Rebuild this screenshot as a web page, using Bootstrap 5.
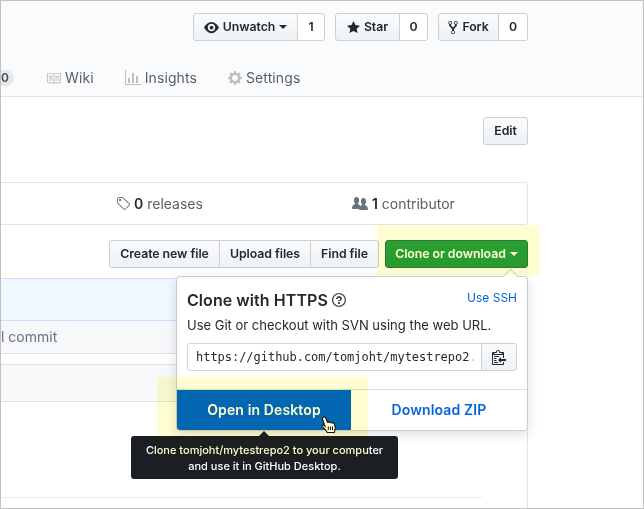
<!DOCTYPE html>
<html lang="en">
<head>
<meta charset="utf-8">
<meta name="viewport" content="width=device-width, initial-scale=1">
<title>mytestrepo2</title>
<link href="https://cdn.jsdelivr.net/npm/bootstrap@5.3.0/dist/css/bootstrap.min.css" rel="stylesheet">
<style>
body { font-family: Inter, "Liberation Sans", sans-serif; font-size: 14px; line-height: 20px; color: #24292e; background: #fff; }
.frame { width: 644px; height: 509px; border: 1px solid #c3c0c0; border-top-color: #c8bfbf; }
svg { fill: currentColor; display: block; flex: none; }
.repo-head { height: 96px; background: #fafbfc; border-bottom: 1px solid #e1e4e8; padding-top: 12px; }
.inner { width: 527px; }
.social { gap: 10px; }
.btn-gh { --bs-btn-color: #24292e; --bs-btn-font-size: 12.3px; --bs-btn-font-weight: 600; --bs-btn-line-height: 18px; --bs-btn-padding-x: 0; --bs-btn-padding-y: 0; --bs-btn-border-color: #cdcfd1; --bs-btn-border-radius: 3px; height: 28px; background-image: linear-gradient(#fafbfc, #eff3f6 90%); display: flex; align-items: center; justify-content: center; white-space: nowrap; letter-spacing: -.05px; }
.btn-group > .btn-gh { flex: none; }
.btn-plain { background: #fff; }
.btn-green { --bs-btn-color: #fff; --bs-btn-border-color: #2c7a3c; background-image: linear-gradient(#2ba03a, #279c35); width: 143px; }
.w-unwatch { width: 105px; } .w-star { width: 65px; } .w-fork { width: 61px; }
.w-n1 { width: 28px; } .w-n2 { width: 29px; } .w-n3 { width: 30px; }
.w-create { width: 111px; } .w-upload { width: 92px; } .w-find { width: 69px; }
.w-edit { width: 45px; }
.caret { width: 0; height: 0; border: 4px solid transparent; border-top-color: currentColor; border-bottom: 0; margin-left: 4px; }
.tabs { height: 36px; margin-top: 19px; color: #586069; font-size: 14px; letter-spacing: .1px; }
.tabs svg { color: #bcbfc2; }
.counter { width: 13px; height: 16px; line-height: 16px; font-size: 12px; font-weight: 600; background: #e8e9eb; border-radius: 0 8px 8px 0; color: #444d56; }
.tab-wiki { margin-left: 32px; } .tab-insights { margin-left: 31px; } .tab-settings { margin-left: 31px; }
.stats { height: 43px; margin-top: 37px; border: 1px solid #e1e4e8; border-left: 0; border-radius: 0 3px 3px 0; color: #586069; }
.stats b { color: #24292e; font-weight: 600; }
.stats svg { color: #6a737d; }
.stat-rel { margin-left: 115px; } .stat-con { margin-left: 149px; }
.actions { margin-top: 15px; gap: 6px; }
.tease { height: 43px; margin-top: 10px; background: #f1f8ff; border: 1px solid #c8e1ff; border-left: 0; }
.commit { height: 33px; background: #f6f8fa; border: 1px solid #dfe2e5; border-top: 0; border-left: 0; color: #6a737d; line-height: 31px; font-size: 14px; }
.files { margin-top: 10px; height: 144px; border: 1px solid #dfe2e5; border-width: 1px 1px 0 0; }
.files-head { height: 37px; background: #f6f8fa; border-bottom: 1px solid #dfe2e5; }
.readme { width: 481px; height: 96px; border-bottom: 1px solid #eaecef; }
.clone-menu { position: absolute; left: 175px; top: 275px; width: 352px; height: 155px; background: #fff; border: 1px solid #c9cbcd; border-radius: 4px; box-shadow: 0 3px 12px rgba(27,31,35,.15); z-index: 2; }
.clone-menu::before { content: ""; position: absolute; right: 11px; top: -6px; width: 11px; height: 11px; background: #fff; border: 1px solid #d5d5bd; border-width: 1px 0 0 1px; transform: rotate(45deg); }
.clone-top { height: 112px; padding: 11px 10px 0; }
.clone-title { font-size: 16px; font-weight: 600; line-height: 24px; letter-spacing: .06px; }
.clone-title svg { color: #444d56; }
.ssh { font-size: 12px; color: #0366d6; text-decoration: none; }
.clone-sub { font-size: 13px; margin-top: 3px; }
.url-box { height: 28px; width: 295px; border: 1px solid #d1d5da; border-radius: 3px 0 0 3px; font: 12px/26px "DejaVu Sans Mono", monospace; letter-spacing: -.03px; padding-left: 8px; overflow: hidden; white-space: nowrap; }
.url-end { color: #c3c6c9; }
.w-copy { width: 36px; margin-left: -1px; border-radius: 0 3px 3px 0; }
.clone-foot { height: 41px; border-top: 1px solid #dcdfe2; font-size: 14px; font-weight: 600; letter-spacing: .13px; }
.open-desk { width: 174px; background: #0366d6; color: #fff; border-radius: 0 0 0 3px; text-decoration: none; }
.zip { color: #0366d6; text-decoration: none; }
.tip { position: absolute; left: 130px; top: 435px; width: 267px; height: 43px; background: #1b1f23; color: #fff; border-radius: 3px; font-size: 11px; line-height: 16px; padding-top: 6px; z-index: 3; font-weight: 500; }
.tip::before { content: ""; position: absolute; left: 128px; top: -5px; border: 5px solid transparent; border-top: 0; border-bottom-color: #1b1f23; }
.glow { position: absolute; background: #fffed2; mix-blend-mode: multiply; z-index: 4; }
.glow-a { left: 376px; top: 224px; width: 163px; height: 50px; }
.glow-b { left: 156px; top: 376px; width: 211px; height: 79px; }
.hand { position: absolute; left: 320px; top: 415px; z-index: 3; }
</style>
<script src="https://cdn.jsdelivr.net/npm/bootstrap@5.3.0/dist/js/bootstrap.bundle.min.js"></script>
</head>
<body>
<div class="frame position-relative overflow-hidden">
  <header class="repo-head">
    <div class="inner social d-flex justify-content-end">
      <div class="btn-group">
        <a class="btn btn-gh w-unwatch"><svg class="me-1" width="15" height="15" viewBox="0 0 16 16"><path fill-rule="evenodd" d="M8.06 2C3 2 0 8 0 8s3 6 8.06 6C13 14 16 8 16 8s-3-6-7.94-6zM8 12c-2.2 0-4-1.78-4-4 0-2.2 1.8-4 4-4 2.22 0 4 1.8 4 4 0 2.22-1.78 4-4 4zm2-4c0 1.11-.89 2-2 2-1.11 0-2-.89-2-2 0-1.11.89-2 2-2 1.11 0 2 .89 2 2z"/></svg><span>Unwatch</span><i class="caret"></i></a>
        <a class="btn btn-gh btn-plain w-n1">1</a>
      </div>
      <div class="btn-group">
        <a class="btn btn-gh w-star"><svg class="me-1" width="13" height="15" viewBox="0 0 14 16"><path d="M14 6l-4.9-.64L7 1 4.9 5.36 0 6l3.6 3.26L2.67 14 7 11.67 11.33 14l-.93-4.74z"/></svg><span>Star</span></a>
        <a class="btn btn-gh btn-plain w-n2">0</a>
      </div>
      <div class="btn-group">
        <a class="btn btn-gh w-fork"><svg class="me-1" width="10" height="15" viewBox="0 0 10 16"><path fill-rule="evenodd" d="M8 1a1.993 1.993 0 0 0-1 3.72V6L5 8 3 6V4.72A1.993 1.993 0 0 0 2 1a1.993 1.993 0 0 0-1 3.72V6.5l3 3v1.78A1.993 1.993 0 0 0 5 15a1.993 1.993 0 0 0 1-3.72V9.5l3-3V4.72A1.993 1.993 0 0 0 8 1zM2 4.2C1.34 4.2.8 3.65.8 3c0-.65.55-1.2 1.2-1.2.65 0 1.2.55 1.2 1.2 0 .65-.55 1.2-1.2 1.2zm3 10c-.66 0-1.2-.55-1.2-1.2 0-.65.55-1.2 1.2-1.2.65 0 1.2.55 1.2 1.2 0 .65-.55 1.2-1.2 1.2zm3-10c-.66 0-1.2-.55-1.2-1.2 0-.65.55-1.2 1.2-1.2.65 0 1.2.55 1.2 1.2 0 .65-.55 1.2-1.2 1.2z"/></svg><span>Fork</span></a>
        <a class="btn btn-gh btn-plain w-n3">0</a>
      </div>
    </div>
    <nav class="tabs d-flex align-items-center">
      <span class="counter">0</span>
      <span class="tab-wiki d-flex align-items-center"><svg class="me-1" width="15" height="15" viewBox="0 0 16 16"><path fill-rule="evenodd" d="M3 5h4v1H3V5zm0 3h4V7H3v1zm0 2h4V9H3v1zm11-5h-4v1h4V5zm0 2h-4v1h4V7zm0 2h-4v1h4V9zm2-6v9c0 .55-.45 1-1 1H9.5l-1 1-1-1H2c-.55 0-1-.45-1-1V3c0-.55.45-1 1-1h5.5l1 1 1-1H15c.55 0 1 .45 1 1zm-8 .5L7.5 3H2v9h6V3.5zm7-.5H9.5l-.5.5V12h6V3z"/></svg><span>Wiki</span></span>
      <span class="tab-insights d-flex align-items-center"><svg class="me-1" width="16" height="16" viewBox="0 0 16 16"><path d="M16 14v1H0V0h1v14h15zM5 13H3V8h2v5zm4 0H7V3h2v10zm4 0h-2V6h2v7z"/></svg><span>Insights</span></span>
      <span class="tab-settings d-flex align-items-center"><svg class="me-1" width="14" height="16" viewBox="0 0 14 16"><path fill-rule="evenodd" d="M14 8.77v-1.6l-1.94-.64-.45-1.09.88-1.84-1.13-1.13-1.81.91-1.09-.45-.69-1.92h-1.6l-.63 1.94-1.11.45-1.84-.88-1.13 1.13.91 1.81-.45 1.09L0 7.23v1.59l1.94.64.45 1.09-.88 1.84 1.13 1.13 1.81-.91 1.09.45.69 1.92h1.59l.63-1.94 1.11-.45 1.84.88 1.13-1.13-.92-1.81.47-1.09L14 8.75v.02zM7 11c-1.66 0-3-1.34-3-3s1.34-3 3-3 3 1.34 3 3-1.34 3-3 3z"/></svg><span>Settings</span></span>
    </nav>
  </header>
  <main class="inner">
    <div class="d-flex justify-content-end pt-3 mt-1"><a class="btn btn-gh w-edit">Edit</a></div>
    <div class="stats d-flex align-items-center">
      <span class="stat-rel d-flex align-items-center"><svg class="me-1" width="14" height="16" viewBox="0 0 14 16"><path fill-rule="evenodd" d="M7.73 1.73C7.26 1.26 6.62 1 5.96 1H3.5C2.13 1 1 2.13 1 3.5v2.47c0 .66.27 1.3.73 1.77l6.06 6.06c.39.39 1.02.39 1.41 0l4.59-4.59a.996.996 0 0 0 0-1.41L7.73 1.73zM2.38 7.09c-.31-.3-.47-.7-.47-1.13V3.5c0-.88.72-1.59 1.59-1.59h2.47c.42 0 .83.16 1.13.47l6.14 6.13-4.73 4.73-6.13-6.15zM3.01 3h2v2H3V3h.01z"/></svg><span><b>0</b> releases</span></span>
      <span class="stat-con d-flex align-items-center"><svg class="me-1" width="16" height="16" viewBox="0 0 16 16"><path d="M16 12.999c0 .439-.45 1-1 1H7.995c-.539 0-.994-.447-.995-.999H1c-.54 0-1-.561-1-1 0-2.634 3-4 3-4s.229-.409 0-1c-.841-.621-1.058-.59-1-3 .058-2.419 1.367-3 2.5-3s2.442.58 2.5 3c.058 2.41-.159 2.379-1 3-.229.59 0 1 0 1s1.549.711 2.42 2.088C9.196 9.369 10 8.999 10 8.999s.229-.409 0-1c-.841-.62-1.058-.59-1-3 .058-2.419 1.367-3 2.5-3s2.437.581 2.495 3c.059 2.41-.158 2.38-1 3-.229.59 0 1 0 1s3.005 1.366 3.005 4"/></svg><span><b>1</b> contributor</span></span>
    </div>
    <div class="actions d-flex justify-content-end">
      <div class="btn-group">
        <a class="btn btn-gh w-create">Create new file</a>
        <a class="btn btn-gh w-upload">Upload files</a>
        <a class="btn btn-gh w-find">Find file</a>
      </div>
      <a class="btn btn-gh btn-green"><span>Clone or download</span><i class="caret"></i></a>
    </div>
    <div class="tease"></div>
    <div class="commit">l commit</div>
    <div class="files"><div class="files-head"></div><div class="readme"></div></div>
  </main>

  <section class="clone-menu">
    <div class="clone-top">
      <div class="d-flex justify-content-between">
        <div class="clone-title d-flex align-items-center"><span>Clone with HTTPS</span><svg class="ms-1" width="14" height="16" viewBox="0 0 14 16"><path fill-rule="evenodd" d="M6 10h2v2H6v-2zm4-3.5C10 8.64 8 9 8 9H6c0-.55.45-1 1-1h.5c.28 0 .5-.22.5-.5v-1c0-.28-.22-.5-.5-.5h-1c-.28 0-.5.22-.5.5V7H4c0-1.5 1.5-3 3-3s3 1 3 2.5zM7 2.3c3.14 0 5.7 2.56 5.7 5.7s-2.56 5.7-5.7 5.7A5.71 5.71 0 0 1 1.3 8c0-3.14 2.56-5.7 5.7-5.7zM7 1C3.14 1 0 4.14 0 8s3.14 7 7 7 7-3.14 7-7-3.14-7-7-7z"/></svg></div>
        <a class="ssh">Use SSH</a>
      </div>
      <div class="clone-sub">Use Git or checkout with SVN using the web URL.</div>
      <div class="d-flex mt-2">
        <div class="url-box">https://github.com/tomjoht/mytestrepo2<span class="url-end">.</span></div>
        <a class="btn btn-gh w-copy"><svg width="14" height="16" viewBox="0 0 14 16"><path fill-rule="evenodd" d="M2 13h4v1H2v-1zm5-6H2v1h5V7zm2 3V8l-3 3 3 3v-2h5v-2H9zM4.5 9H2v1h2.5V9zM2 12h2.5v-1H2v1zm9 1h1v2c-.02.28-.11.52-.3.7-.19.18-.42.28-.7.3H1c-.55 0-1-.45-1-1V4c0-.55.45-1 1-1h3c0-1.11.89-2 2-2 1.11 0 2 .89 2 2h3c.55 0 1 .45 1 1v5h-1V6H1v9h10v-2zM2 5h8c0-.55-.45-1-1-1H8c-.55 0-1-.45-1-1s-.45-1-1-1-1 .45-1 1-.45 1-1 1H3c-.55 0-1 .45-1 1z"/></svg></a>
      </div>
    </div>
    <div class="clone-foot d-flex">
      <a class="open-desk d-flex align-items-center justify-content-center">Open in Desktop</a>
      <a class="zip flex-fill d-flex align-items-center justify-content-center">Download ZIP</a>
    </div>
  </section>
  <div class="tip text-center">Clone tomjoht/mytestrepo2 to your computer<br>and use it in GitHub Desktop.</div>
  <svg class="hand" width="16" height="18" viewBox="0 0 16 18"><path d="M2.2 1.2C3.300.600 4.300 1.200 4.800 2.300L6.400 6.200C7.200 5.600 8.200 5.900 8.700 6.600 9.500 6 10.500 6.300 11 7.100 12 6.600 13 7 13.400 8L14.200 11C14.600 13 13.600 14 13.300 16.500H6.300C5.600 14.500 3.300 12.700 1.200 10.600.500 9.500 1.600 8.600 2.800 9.200L4 10.200 1.600 3.300C1.300 2.400 1.500 1.500 2.200 1.200z" fill="#fff" stroke="#111" stroke-width="1.100"/><path d="M7.300 10.500v3.500M9.400 10.500v3.500M11.500 10.500v3.500" stroke="#111" fill="none"/></svg>
  <div class="glow glow-a"></div>
  <div class="glow glow-b"></div>
</div>
</body>
</html>
